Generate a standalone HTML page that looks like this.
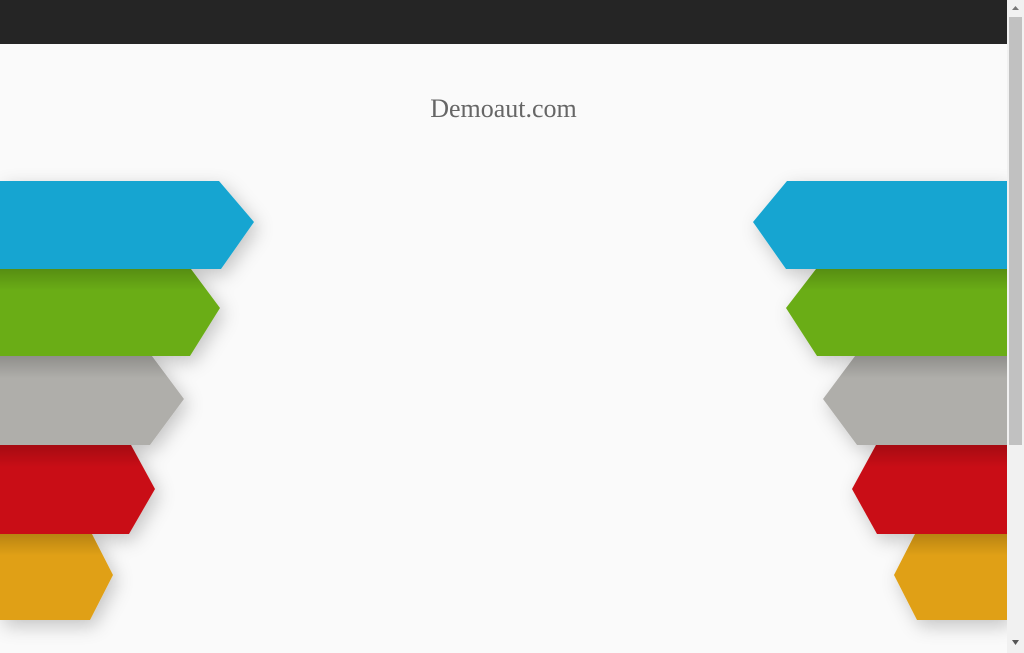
<!DOCTYPE html>
<html><head><meta charset="utf-8"><style>
html,body{margin:0;padding:0;}
body{width:1024px;height:653px;background:#fafafa;position:relative;overflow:hidden;}
.top{position:absolute;left:0;top:0;width:1007px;height:44px;background:#252525;}
.title{position:absolute;left:0;width:1007px;top:94px;text-align:center;font-family:"Liberation Serif",serif;font-size:26px;color:#666;}
.sb{position:absolute;left:1007px;top:0;width:17px;height:653px;background:#f1f1f1;}
.th{position:absolute;left:1009px;top:17px;width:13px;height:428px;background:#c1c1c1;}
svg{position:absolute;left:0;top:0;}
</style></head><body>
<div class="top"></div>
<div class="title">Demoaut.com</div>
<svg width="1007" height="653">
<defs><filter id="s" x="-20%" y="-20%" width="140%" height="140%"><feDropShadow dx="4" dy="6" stdDeviation="9" flood-color="#000" flood-opacity="0.22"/></filter>
<linearGradient id="d" x1="0" y1="0" x2="0" y2="1"><stop offset="0" stop-color="#000" stop-opacity="0.18"/><stop offset="0.25" stop-color="#000" stop-opacity="0"/></linearGradient></defs>
<g filter="url(#s)">
<polygon points="0,534 92,534 113,575 90,620 0,620" fill="#e0a013"/>
<polygon points="0,445 131,445 155,489 129,534 0,534" fill="#c91113"/>
<polygon points="0,356 152,356 184,399 150,445 0,445" fill="#afaeaa"/>
<polygon points="0,269 191,269 220,308 190,356 0,356" fill="#6aad14"/>
<polygon points="0,181 219,181 254,222 221,269 0,269" fill="#12a5d1"/>
<polygon points="1007,534 915,534 894,575 917,620 1007,620" fill="#e0a013"/>
<polygon points="1007,445 876,445 852,489 877,534 1007,534" fill="#c91113"/>
<polygon points="1007,356 855,356 823,399 857,445 1007,445" fill="#afaeaa"/>
<polygon points="1007,269 816,269 786,308 817,356 1007,356" fill="#6aad14"/>
<polygon points="1007,181 787,181 753,222 786,269 1007,269" fill="#12a5d1"/>
</g>
<g fill="url(#d)">
<polygon points="0,534 92,534 113,575 90,620 0,620"/>
<polygon points="0,445 131,445 155,489 129,534 0,534"/>
<polygon points="0,356 152,356 184,399 150,445 0,445"/>
<polygon points="0,269 191,269 220,308 190,356 0,356"/>
<polygon points="1007,534 915,534 894,575 917,620 1007,620"/>
<polygon points="1007,445 876,445 852,489 877,534 1007,534"/>
<polygon points="1007,356 855,356 823,399 857,445 1007,445"/>
<polygon points="1007,269 816,269 786,308 817,356 1007,356"/>
</g>
</svg>
<div class="sb"></div>
<div class="th"></div>
<svg style="left:1007px" width="17" height="653"><polygon points="5,10 12,10 8.5,6" fill="#777"/><polygon points="5,640 12,640 8.5,645" fill="#555"/></svg>
</body></html>
